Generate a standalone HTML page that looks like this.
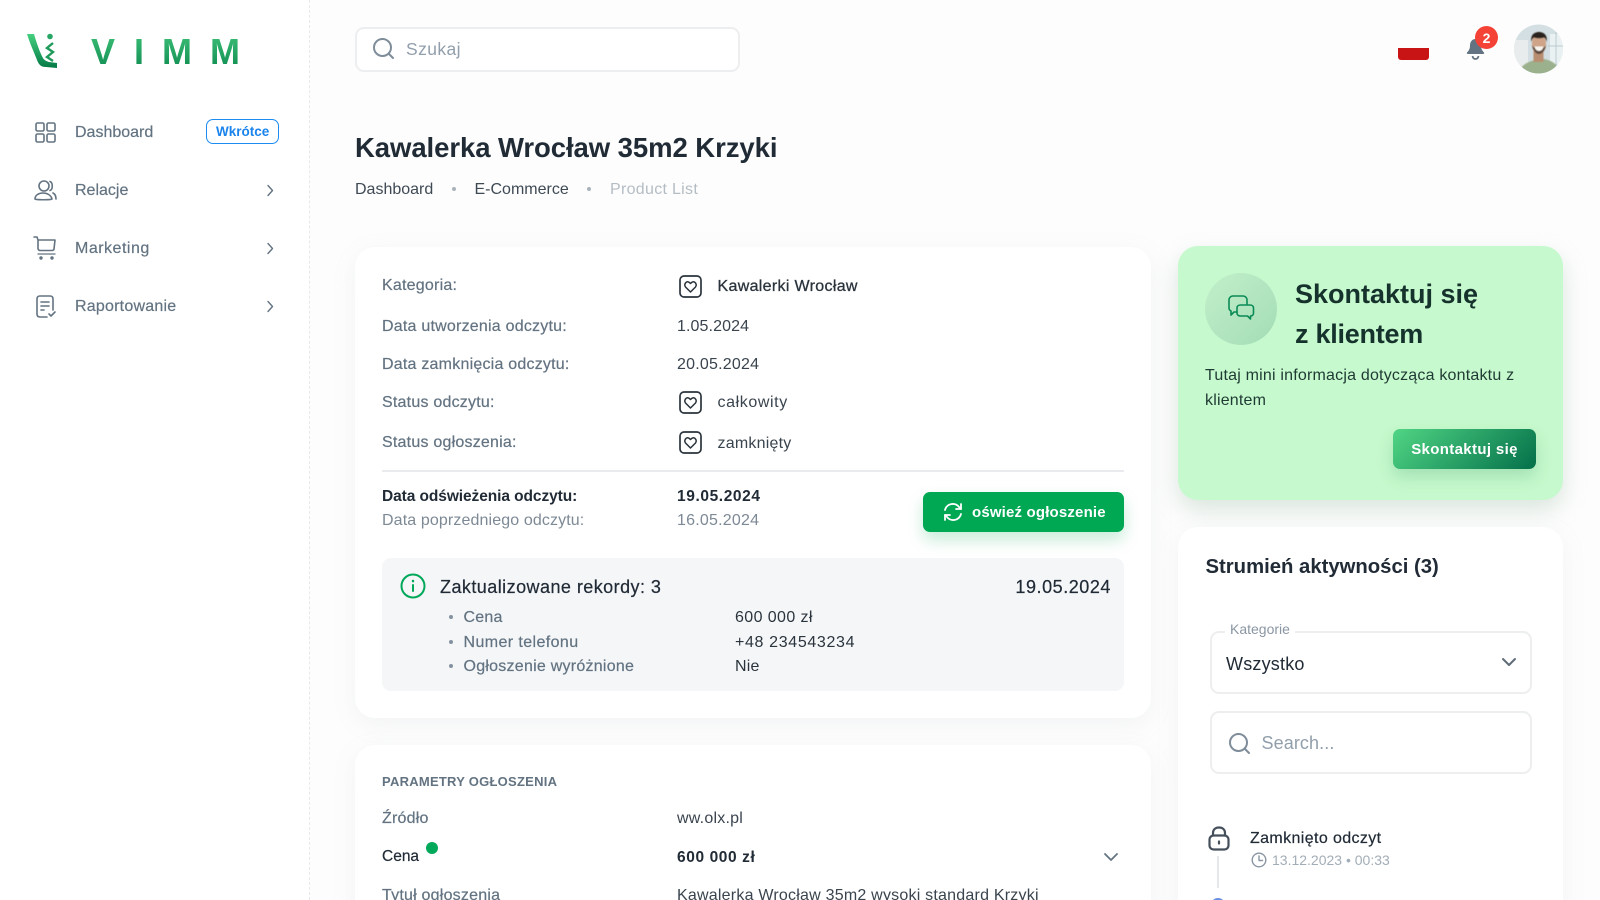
<!DOCTYPE html>
<html lang="pl"><head><meta charset="utf-8"><title>VIMM</title>
<style>
html,body{margin:0;padding:0;width:1600px;height:900px;overflow:hidden;background:#fdfdfd}
body{position:relative;font-family:"Liberation Sans",sans-serif;color:#212b36}
.t{position:absolute;white-space:nowrap;line-height:20px;height:20px;margin-top:-10px;font-size:16px;letter-spacing:.22px}
.g{color:#637381;-webkit-text-stroke:.2px #637381}.d{color:#212b36}.l{color:#919eab}
.b{font-weight:bold}
.a{position:absolute;box-sizing:border-box}
svg{position:absolute;overflow:visible}
.card{background:#fff;border-radius:20px;box-shadow:0 6px 24px rgba(145,158,171,.10)}
.ic{fill:none;stroke:#637381;stroke-width:1.6;stroke-linecap:round;stroke-linejoin:round}
.lg{position:absolute;font-weight:bold;font-size:36px;line-height:38px;background:linear-gradient(180deg,#3cc077,#0f8a50);-webkit-background-clip:text;background-clip:text;color:transparent}
</style></head><body>

<div class="a" style="left:0;top:0;width:310px;height:900px;background:#fff;border-right:1px dashed #e6e8eb"></div>
<svg style="left:0;top:0" width="70" height="80">
<defs><linearGradient id="lm" x1="0" y1="0" x2="0" y2="1"><stop offset="0" stop-color="#45d07f"/><stop offset="1" stop-color="#047a45"/></linearGradient></defs>
<path fill="url(#lm)" d="M27 34 L34 34 C37 44 40 53 43 58 C44 60 46 61 49 62 L57 63 L57 68 L46 67 C41 67 39 65 37 60 C34 52 30 44 27 34Z"/>
<circle cx="50" cy="36.5" r="2.8" fill="#27a565"/>
<path d="M53 43 L47 48 L53 52 L47 57 L53 61" fill="none" stroke="#1e9a5a" stroke-width="2.4"/>
</svg>
<span class="lg" style="left:91px;top:33px">V</span>
<span class="lg" style="left:134px;top:33px">I</span>
<span class="lg" style="left:162px;top:33px">M</span>
<span class="lg" style="left:210px;top:33px">M</span>

<svg style="left:35px;top:122px" width="21" height="21" class="ic"><rect x="1" y="1" width="8" height="8" rx="1.5"/><rect x="12" y="1" width="8" height="8" rx="1.5"/><rect x="1" y="12" width="8" height="8" rx="1.5"/><rect x="12" y="12" width="8" height="8" rx="1.5"/></svg>
<span class="t g" style="left:75px;top:133px;letter-spacing:0">Dashboard</span>
<div class="a" style="left:206px;top:119px;width:73px;height:25px;border:1.5px solid #1d8cf0;border-radius:7px"></div>
<span class="t b" style="left:216px;top:132px;font-size:13.5px;color:#1a84ec;letter-spacing:0">Wkrótce</span>

<svg style="left:34px;top:180px" width="24" height="21" class="ic"><circle cx="10" cy="6" r="5"/><path d="M1 19c0-4 4-6 8-6s8 2 9 6c-1 1-16 1-17 0z"/><path d="M16 1.500c3 1 3 8 0 9M19 13c2 1 3 3 3 6"/></svg>
<span class="t g" style="left:75px;top:191px;letter-spacing:0">Relacje</span>

<svg style="left:33px;top:236px" width="24" height="24" class="ic"><path d="M1 1h3l1 3h17l-1 9c0 1-1 1.500-2 1.500H7c-1 0-2-1-2-2V4"/><path d="M5 18h17" stroke-width="1.300"/><circle cx="8" cy="22" r=".9" fill="#637381"/><circle cx="19" cy="22" r=".9" fill="#637381"/></svg>
<span class="t g" style="left:75px;top:249px;letter-spacing:.5px">Marketing</span>

<svg style="left:35px;top:295px" width="22" height="24" class="ic"><path d="M12 22H5c-2 0-3-1-3-3V4c0-2 1-3 3-3h10c2 0 3 1 3 3v11"/><path d="M6 7h8M6 11h8M6 15h3"/><path d="M14 19l2 2 4-4"/></svg>
<span class="t g" style="left:75px;top:307px">Raportowanie</span>

<svg style="left:266px;top:184px" width="8" height="13" fill="none" stroke="#637381" stroke-width="1.400" stroke-linecap="round" stroke-linejoin="round"><path d="M2 1.500l4.500 5-4.500 5"/></svg>
<svg style="left:266px;top:242px" width="8" height="13" fill="none" stroke="#637381" stroke-width="1.400" stroke-linecap="round" stroke-linejoin="round"><path d="M2 1.500l4.500 5-4.500 5"/></svg>
<svg style="left:266px;top:300px" width="8" height="13" fill="none" stroke="#637381" stroke-width="1.400" stroke-linecap="round" stroke-linejoin="round"><path d="M2 1.500l4.500 5-4.500 5"/></svg>

<div class="a" style="left:355px;top:27px;width:385px;height:45px;border:2px solid #eceef0;border-radius:9px;background:#fff"></div>
<svg style="left:372px;top:37px" width="24" height="24" fill="none" stroke="#7f8d9a" stroke-width="2" stroke-linecap="round"><circle cx="10.500" cy="10.500" r="8.500"/><path d="M17 17l4 4"/></svg>
<span class="t l" style="left:406px;top:49px;font-size:17.500px;letter-spacing:.4px">Szukaj</span>

<div class="a" style="left:1398px;top:48px;width:31px;height:12px;background:#c81414;border-radius:0 0 3px 3px"></div>
<svg style="left:1466px;top:38px" width="20" height="22"><path fill="#637381" d="M9.500 1c3.500 0 5.500 3 5.500 6.500 0 3 1 5 3 7 .5.800 0 1.500-1 1.500H2c-1 0-1.500-.7-1-1.500 2-2 3-4 3-7C4 4 6 1 9.500 1z"/><path fill="none" stroke="#637381" stroke-width="1.800" d="M6.500 18c.4 2 1.500 3 3 3s2.600-1 3-3"/></svg>
<div class="a" style="left:1475px;top:26px;width:23px;height:23px;border-radius:50%;background:#f44336"></div>
<span class="t b" style="left:1475px;top:37.500px;width:23px;text-align:center;color:#fff;font-size:14px;letter-spacing:0">2</span>

<svg style="left:1514px;top:24px" width="49" height="50" viewBox="0 0 49 50">
<defs><clipPath id="av"><circle cx="24.500" cy="25" r="24.500"/></clipPath><filter id="bl"><feGaussianBlur stdDeviation=".5"/></filter></defs>
<g clip-path="url(#av)"><rect width="49" height="50" fill="#d3dfe2"/>
<rect x="0" y="16" width="14" height="34" fill="#e8ecec"/><rect x="36" y="10" width="13" height="30" fill="#eaf1f2"/><path d="M42 8v36M34 22h15" stroke="#b9cacd" stroke-width="1"/>
<g filter="url(#bl)"><path fill="#9bb08c" d="M5 50c1-7 5-11 16-14l4 2 5-3c9 2 15 6 16 15z"/><rect x="19.500" y="27" width="10" height="11" fill="#b98d70"/><ellipse cx="25" cy="20" rx="7" ry="10" fill="#cfa488"/><path fill="#2a211c" d="M17.500 18c-1.500-7 3-10 7.500-10s9 3 7.500 10c-.5-3-1.500-4-2.500-4.500-3 1-7 1-10 0-1 .5-2 1.500-2.500 4.500z"/><path fill="#5c463a" d="M18 21c1 6 4 9 7 9s6-3 7-9c-1 2-2 2.500-3 2.500h-8c-1 0-2-.5-3-2.500z"/><path fill="#f8f4ee" d="M20.500 22.500h9c-.5 3-2.500 4.500-4.500 4.500s-4-1.500-4.500-4.500z"/></g></g></svg>

<span class="t b d" style="left:355px;top:148px;font-size:27.500px;height:34px;line-height:34px;margin-top:-17px;letter-spacing:-.07px">Kawalerka Wrocław 35m2 Krzyki</span>
<span class="t" style="left:355px;top:190px;color:#3f4a55;letter-spacing:0">Dashboard</span>
<div class="a" style="left:452px;top:187px;width:4px;height:4px;border-radius:50%;background:#a9b3bc"></div>
<span class="t" style="left:474.500px;top:190px;color:#3f4a55;letter-spacing:0">E-Commerce</span>
<div class="a" style="left:587px;top:187px;width:4px;height:4px;border-radius:50%;background:#a9b3bc"></div>
<span class="t" style="left:610px;top:190px;color:#b4bcc4;letter-spacing:.3px">Product List</span>

<div class="a card" style="left:355px;top:247px;width:796px;height:471px"></div>
<span class="t g" style="left:382px;top:286px">Kategoria:</span>
<span class="t g" style="left:382px;top:326.500px">Data utworzenia odczytu:</span>
<span class="t g" style="left:382px;top:364.500px">Data zamknięcia odczytu:</span>
<span class="t g" style="left:382px;top:402.500px">Status odczytu:</span>
<span class="t g" style="left:382px;top:443px">Status ogłoszenia:</span>

<svg style="left:679px;top:275px" width="23" height="23"><rect x="1" y="1" width="21" height="21" rx="4" fill="none" stroke="#2b343d" stroke-width="1.700"/><path d="M11.500 17l-5-5c-2-3 1-6 3-5 1 .4 1.500 1 2 1.500.5-.5 1-1.100 2-1.500 2-1 5 2 3 5z" fill="none" stroke="#2b343d" stroke-width="1.500" stroke-linejoin="round"/></svg>
<svg style="left:679px;top:391px" width="23" height="23"><rect x="1" y="1" width="21" height="21" rx="4" fill="none" stroke="#2b343d" stroke-width="1.700"/><path d="M11.500 17l-5-5c-2-3 1-6 3-5 1 .4 1.500 1 2 1.500.5-.5 1-1.100 2-1.500 2-1 5 2 3 5z" fill="none" stroke="#2b343d" stroke-width="1.500" stroke-linejoin="round"/></svg>
<svg style="left:679px;top:431px" width="23" height="23"><rect x="1" y="1" width="21" height="21" rx="4" fill="none" stroke="#2b343d" stroke-width="1.700"/><path d="M11.500 17l-5-5c-2-3 1-6 3-5 1 .4 1.500 1 2 1.500.5-.5 1-1.100 2-1.500 2-1 5 2 3 5z" fill="none" stroke="#2b343d" stroke-width="1.500" stroke-linejoin="round"/></svg>

<span class="t" style="left:717.500px;top:287px;color:#2b343d;-webkit-text-stroke:.3px #2b343d;letter-spacing:.32px">Kawalerki Wrocław</span>
<span class="t" style="left:677px;top:326.500px;color:#3a444e;letter-spacing:.1px">1.05.2024</span>
<span class="t" style="left:677px;top:364.500px;color:#3a444e">20.05.2024</span>
<span class="t" style="left:717.500px;top:403px;color:#3a444e;letter-spacing:.6px">całkowity</span>
<span class="t" style="left:717.500px;top:444px;color:#3a444e">zamknięty</span>
<div class="a" style="left:382px;top:470px;width:742px;height:1.500px;background:#e9ebee"></div>
<span class="t b d" style="left:382px;top:497px;font-size:15.5px;letter-spacing:-.08px">Data odświeżenia odczytu:</span>
<span class="t b d" style="left:677px;top:497px;font-size:15.5px;letter-spacing:.6px">19.05.2024</span>
<span class="t" style="left:382px;top:521px;color:#7d8995;letter-spacing:.12px">Data poprzedniego odczytu:</span>
<span class="t" style="left:677px;top:521px;color:#7d8995">16.05.2024</span>

<div class="a" style="left:923px;top:492px;width:201px;height:40px;border-radius:7px;background:#00a854;box-shadow:0 8px 16px rgba(0,168,84,.22)"></div>
<svg style="left:942px;top:501px" width="22" height="22" fill="none" stroke="#fff" stroke-width="1.800" stroke-linecap="round" stroke-linejoin="round"><path d="M3 9a8 8 0 0 1 14-3l2 2"/><path d="M19 3v5h-5" /><path d="M19 13a8 8 0 0 1-14 3l-2-2"/><path d="M3 19v-5h5"/></svg>
<span class="t b" style="left:972px;top:513px;color:#fff;font-size:15px;letter-spacing:.17px">oświeź ogłoszenie</span>

<div class="a" style="left:382px;top:558px;width:742px;height:133px;background:#f4f6f8;border-radius:9px"></div>
<svg style="left:400px;top:573px" width="26" height="26" fill="none" stroke="#00a85a" stroke-width="2" stroke-linecap="round"><circle cx="13" cy="13" r="11.500"/><path d="M13 12v6" /><path d="M13 8v.2" stroke-width="2.400"/></svg>
<span class="t d" style="left:440px;top:587px;font-size:18px;-webkit-text-stroke:.2px #212b36;letter-spacing:.45px">Zaktualizowane rekordy: 3</span>
<span class="t d" style="right:489px;top:587px;font-size:18px;-webkit-text-stroke:.2px #212b36;letter-spacing:.55px">19.05.2024</span>
<div class="a" style="left:449px;top:615px;width:4px;height:4px;border-radius:50%;background:#8592a0"></div>
<div class="a" style="left:449px;top:640px;width:4px;height:4px;border-radius:50%;background:#8592a0"></div>
<div class="a" style="left:449px;top:664px;width:4px;height:4px;border-radius:50%;background:#8592a0"></div>
<span class="t g" style="left:463.500px;top:618px">Cena</span>
<span class="t g" style="left:463.500px;top:643px;letter-spacing:.4px">Numer telefonu</span>
<span class="t g" style="left:463.500px;top:667px;letter-spacing:.25px">Ogłoszenie wyróżnione</span>
<span class="t" style="left:735px;top:618px;color:#2b343d;letter-spacing:.4px">600 000 zł</span>
<span class="t" style="left:735px;top:643px;color:#2b343d;letter-spacing:.65px">+48 234543234</span>
<span class="t" style="left:735px;top:667px;color:#2b343d">Nie</span>

<div class="a card" style="left:355px;top:745px;width:796px;height:200px"></div>
<span class="t b" style="left:382px;top:782px;font-size:13px;color:#637381;letter-spacing:.25px">PARAMETRY OGŁOSZENIA</span>
<span class="t g" style="left:382px;top:819px">Źródło</span>
<span class="t" style="left:677px;top:819px;color:#3a444e">ww.olx.pl</span>
<span class="t d" style="left:382px;top:857px;-webkit-text-stroke:.2px #212b36;font-size:15.5px;letter-spacing:0">Cena</span>
<div class="a" style="left:426px;top:842px;width:12px;height:12px;border-radius:50%;background:#00a85a"></div>
<span class="t b d" style="left:677px;top:858px;font-size:15.5px;letter-spacing:.6px">600 000 zł</span>
<svg style="left:1103px;top:851px" width="16" height="12" fill="none" stroke="#637381" stroke-width="1.800" stroke-linecap="round" stroke-linejoin="round"><path d="M2 3l6 6 6-6"/></svg>
<span class="t g" style="left:382px;top:896px">Tytuł ogłoszenia</span>
<span class="t" style="left:677px;top:896px;color:#3a444e">Kawalerka Wrocław 35m2 wysoki standard Krzyki</span>

<div class="a" style="left:1178px;top:246px;width:385px;height:254px;border-radius:20px;background:#c6f9cd;box-shadow:0 10px 24px rgba(130,170,140,.28)"></div>
<div class="a" style="left:1205px;top:273px;width:72px;height:72px;border-radius:50%;background:linear-gradient(135deg,#c2f0ca,#a3dcb6)"></div>
<svg style="left:1228px;top:295px" width="27" height="27" fill="none" stroke="#0a8a55" stroke-width="1.600" stroke-linejoin="round" stroke-linecap="round"><path d="M9 17H6l-3 3v-4c-1-.5-2-1.500-2-3V5c0-2 1.500-4 4-4h10c2.500 0 4 2 4 4v4"/><path d="M12 10h10c2 0 3.500 1 3.500 3v5c0 2-1.500 3-3 3v3l-3-3h-7c-2 0-3.500-1-3.500-3v-5c0-2 1.500-3 3.500-3z"/></svg>
<span class="t b" style="left:1295px;top:293.500px;font-size:27px;height:34px;line-height:34px;margin-top:-17px;color:#16322c;letter-spacing:0">Skontaktuj się</span>
<span class="t b" style="left:1295px;top:334px;font-size:27px;height:34px;line-height:34px;margin-top:-17px;color:#16322c;letter-spacing:-.25px">z klientem</span>
<span class="t" style="left:1205px;top:376px;color:#1f3a33;letter-spacing:.2px">Tutaj mini informacja dotycząca kontaktu z</span>
<span class="t" style="left:1205px;top:401px;color:#1f3a33;letter-spacing:.2px">klientem</span>
<div class="a" style="left:1393px;top:429px;width:143px;height:40px;border-radius:7px;background:linear-gradient(135deg,#50d584,#04704a);box-shadow:0 8px 16px rgba(0,120,70,.18)"></div>
<span class="t b" style="left:1393px;top:450px;width:143px;text-align:center;color:#fff;font-size:15px;letter-spacing:.35px">Skontaktuj się</span>

<div class="a card" style="left:1178px;top:527px;width:385px;height:420px"></div>
<span class="t b d" style="left:1205.500px;top:567px;font-size:20.300px;letter-spacing:0">Strumień aktywności (3)</span>
<div class="a" style="left:1210px;top:631px;width:322px;height:63px;border:2px solid #eceef0;border-radius:9px;background:#fff"></div>
<span class="t" style="left:1225px;top:629px;font-size:14px;background:#fff;padding:0 5px;color:#8a96a3;letter-spacing:0">Kategorie</span>
<span class="t d" style="left:1226px;top:664px;font-size:18px;letter-spacing:.2px">Wszystko</span>
<svg style="left:1501px;top:656px" width="16" height="12" fill="none" stroke="#5f6b77" stroke-width="2" stroke-linecap="round" stroke-linejoin="round"><path d="M2 3l6 6 6-6"/></svg>
<div class="a" style="left:1210px;top:711px;width:322px;height:63px;border:2px solid #eceef0;border-radius:9px;background:#fff"></div>
<svg style="left:1228px;top:732px" width="24" height="24" fill="none" stroke="#7f8d9a" stroke-width="2" stroke-linecap="round"><circle cx="10.500" cy="10.500" r="8.500"/><path d="M17 17l4 4"/></svg>
<span class="t l" style="left:1261.500px;top:743px;font-size:18px;letter-spacing:.1px">Search...</span>
<svg style="left:1208px;top:826px" width="22" height="25" fill="none" stroke="#454f5b" stroke-width="2.200" stroke-linecap="round"><rect x="1.500" y="9.500" width="19" height="14" rx="4"/><path d="M5 9.500V7c0-3.500 2.500-5.500 6-5.500s6 2 6 5.500v2.500"/><path d="M11 15.500v2"/></svg>
<div class="a" style="left:1217px;top:856px;width:2px;height:32px;background:#e6e8eb"></div>
<div class="a" style="left:1211px;top:898px;width:14px;height:14px;border-radius:50%;background:#6a8fe0"></div>
<span class="t d" style="left:1250px;top:839px;-webkit-text-stroke:.2px #212b36;letter-spacing:.38px">Zamknięto odczyt</span>
<svg style="left:1251px;top:852px" width="16" height="16" fill="none" stroke="#8a96a3" stroke-width="1.400" stroke-linecap="round" stroke-linejoin="round"><circle cx="8" cy="8" r="6.800"/><path d="M8 4v4.500h3.500"/></svg>
<span class="t" style="left:1272px;top:860px;font-size:14px;color:#a3adb7;letter-spacing:0">13.12.2023 • 00:33</span>
</body></html>
